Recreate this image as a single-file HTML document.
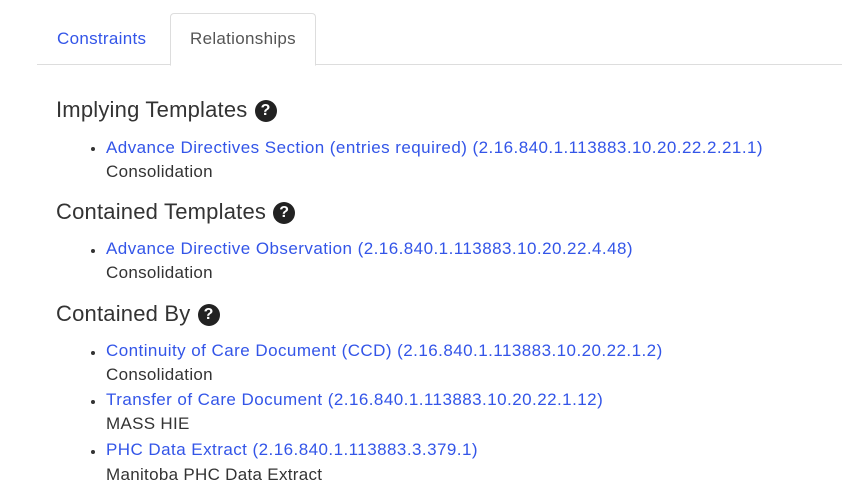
<!DOCTYPE html>
<html><head><style>
body{margin:0;width:842px;height:492px;background:#fff;font-family:"Liberation Sans",Arial,sans-serif;color:#333;position:relative;overflow:hidden}
.a{position:absolute;white-space:nowrap}
.l{color:#3355e8;font-size:17px;letter-spacing:0.45px}
.t{font-size:17px;letter-spacing:0.3px;color:#333}
.h{font-size:22px;letter-spacing:0.2px;color:#333}
.q{display:inline-block;width:22px;height:22px;border-radius:50%;background:#222;color:#fff;font-size:16px;font-weight:bold;text-align:center;line-height:22px;vertical-align:2px;margin-left:7px;letter-spacing:0}
.b{position:absolute;width:4px;height:4px;border-radius:50%;background:#333}
</style></head><body>
<div class="a" style="left:37px;top:64px;width:805px;height:1px;background:#ddd"></div>
<div class="a" style="left:170px;top:13px;width:144px;height:51px;border:1px solid #ddd;border-bottom:1px solid #fff;border-radius:4px 4px 0 0;background:#fff"></div>
<div class="a l" style="left:57px;top:29px;letter-spacing:0.3px">Constraints</div>
<div class="a t" style="left:190px;top:29px;color:#555">Relationships</div>

<div class="a h" style="left:56px;top:97px">Implying Templates<span class="q">?</span></div>
<div class="b" style="left:91px;top:147px"></div>
<div class="a l" style="left:106px;top:138px">Advance Directives Section (entries required) (2.16.840.1.113883.10.20.22.2.21.1)</div>
<div class="a t" style="left:106px;top:162px">Consolidation</div>

<div class="a h" style="left:56px;top:199px">Contained Templates<span class="q">?</span></div>
<div class="b" style="left:91px;top:249px"></div>
<div class="a l" style="left:106px;top:239px">Advance Directive Observation (2.16.840.1.113883.10.20.22.4.48)</div>
<div class="a t" style="left:106px;top:263px">Consolidation</div>

<div class="a h" style="left:56px;top:301px">Contained By<span class="q">?</span></div>
<div class="b" style="left:91px;top:351px"></div>
<div class="a l" style="left:106px;top:341px">Continuity of Care Document (CCD) (2.16.840.1.113883.10.20.22.1.2)</div>
<div class="a t" style="left:106px;top:365px">Consolidation</div>
<div class="b" style="left:91px;top:400px"></div>
<div class="a l" style="left:106px;top:390px">Transfer of Care Document (2.16.840.1.113883.10.20.22.1.12)</div>
<div class="a t" style="left:106px;top:414px">MASS HIE</div>
<div class="b" style="left:91px;top:450px"></div>
<div class="a l" style="left:106px;top:440px">PHC Data Extract (2.16.840.1.113883.3.379.1)</div>
<div class="a t" style="left:106px;top:465px">Manitoba PHC Data Extract</div>
</body></html>
